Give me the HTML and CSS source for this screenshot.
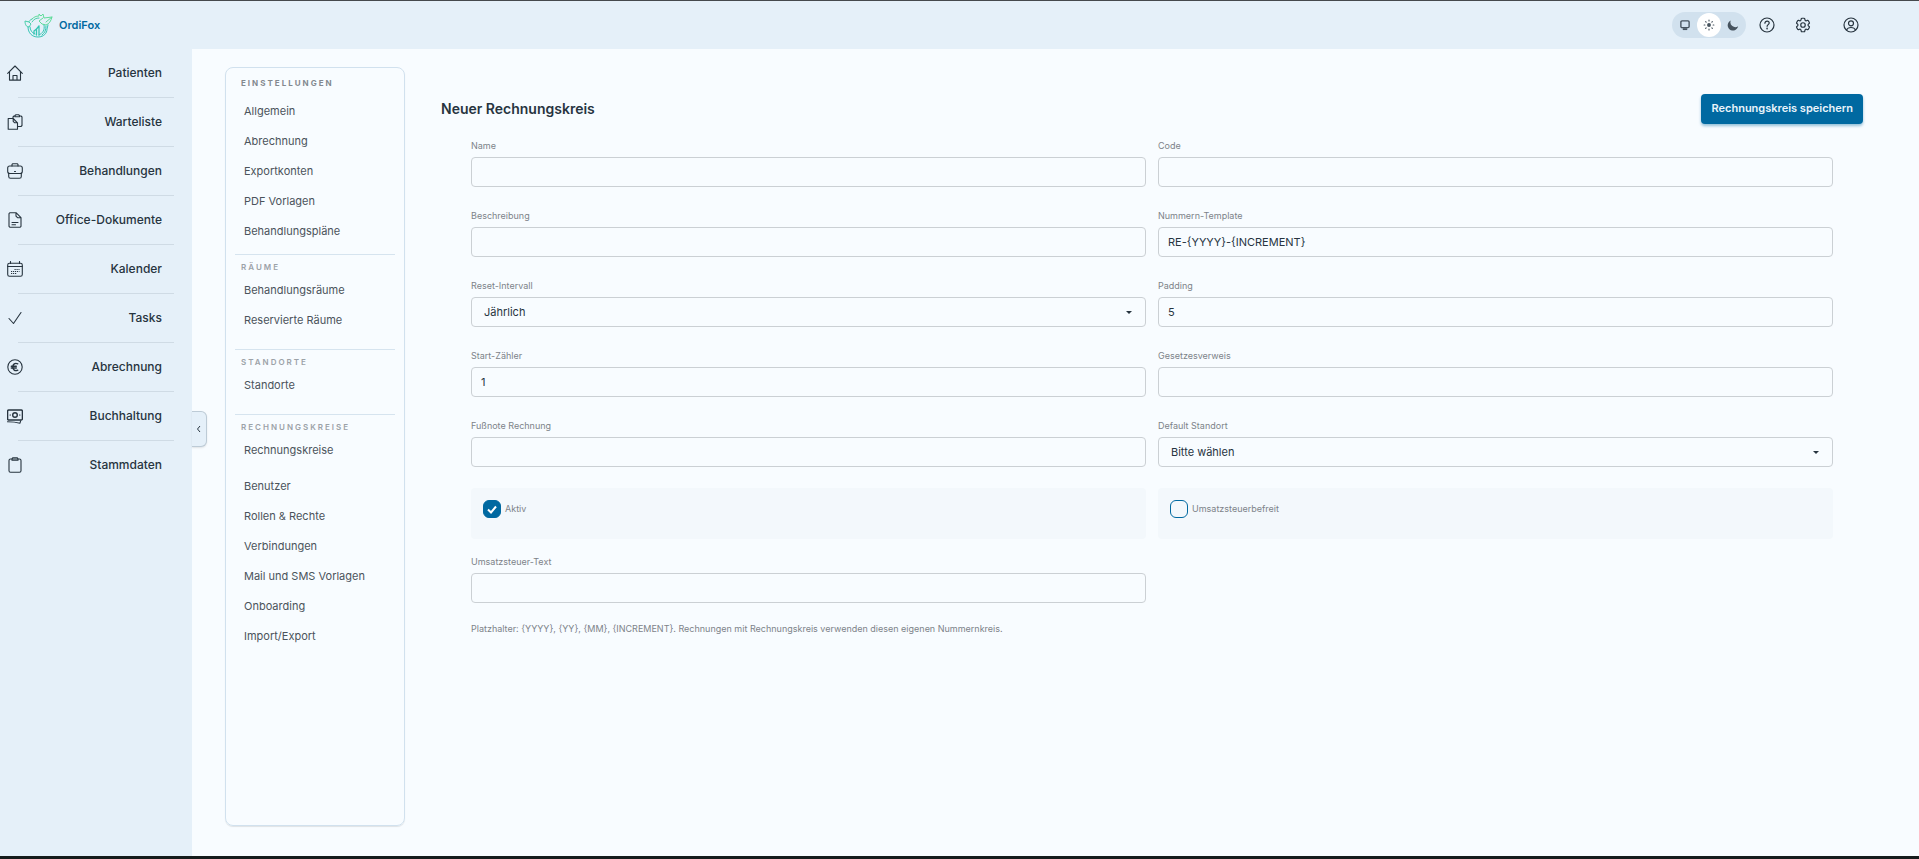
FILE: index.html
```
<!DOCTYPE html>
<html lang="de">
<head>
    <meta charset="UTF-8">
    <meta name="viewport" content="width=device-width, initial-scale=1.0">
    <title>OrdiFox - Neuer Rechnungskreis</title>
    <link rel="stylesheet" href="styles.css">
</head>
<body>
    <header class="topbar">
        <a href="#" class="brand">
            <svg class="brand-logo" viewBox="0 0 29 25" fill="none" stroke="#35c5b4" stroke-linejoin="round" stroke-linecap="round">
                <path stroke="#5fdc9a" d="M8 6c2-2 4-3 7-3V1l2 2 2-2 1 4 8-1c-1 4-3 7-6 8l-4-1-3-3 4-3M22 9l6-5"/>
                <path stroke="#48cfaa" d="M8 6C6 7 5 8 5 9L1 8c0 3 1 6 4 6L7 11 5 9M8 9c2-3 4-4 7-4"/>
                <path d="M4 14c0 6 4 10 10 10 6 0 9-4 9-8l1-4M6 14c0 3 2 6 5 7M15 22c4-2 6-5 5-10M18 22c3-2 4-5 4-9"/>
                <path stroke-width="1.3" d="M10 18v3M12.500 16v6M15 13v9M10 18l2.500-2 2.500-3"/>
            </svg>
            <span>OrdiFox</span>
        </a>
        <div class="topbar-actions">
            <div class="theme-switch">
                <button type="button" class="theme-btn" aria-label="System">
                    <svg viewBox="0 0 16 16" width="12" height="12" fill="none" stroke="currentColor" stroke-width="1.8"><rect x="2.500" y="2.500" width="11" height="9" rx="1.500"/><path d="M5 13.500h6" stroke-width="2.500"/></svg>
                </button>
                <button type="button" class="theme-btn active" aria-label="Hell">
                    <svg viewBox="0 0 16 16" width="12" height="12" fill="none" stroke="currentColor" stroke-width="1.5" stroke-linecap="round"><circle cx="8" cy="8" r="2.600" fill="currentColor" stroke="none"/><path d="M8 1.500v1M8 13.500v1M1.500 8h1M13.500 8h1M3.500 3.500l.7.7M11.800 11.800l.7.7M3.500 12.500l.7-.7M11.800 4.200l.7-.7"/></svg>
                </button>
                <button type="button" class="theme-btn" aria-label="Dunkel">
                    <svg viewBox="0 0 16 16" width="12" height="12" fill="currentColor"><path d="M5 2a6.500 6.500 0 0 0 9.800 7.600A7 7 0 1 1 5 2z"/></svg>
                </button>
            </div>
            <button type="button" class="icon-btn" aria-label="Hilfe">
                <svg viewBox="0 0 16 16" width="16" height="16" fill="none" stroke="currentColor" stroke-width="1.2" stroke-linecap="round"><circle cx="8" cy="8" r="7"/><path d="M5.900 6.200c0-1.300 1-2.100 2.200-2.100s2.100.8 2.100 1.900c0 1.500-2.100 1.700-2.100 3.300"/><circle cx="8.100" cy="11.500" r=".3"/></svg>
            </button>
            <button type="button" class="icon-btn" aria-label="Einstellungen">
                <svg viewBox="0 0 24 24" width="18" height="18" fill="none" stroke="currentColor" stroke-width="1.6" stroke-linecap="round" stroke-linejoin="round"><path d="M9.594 3.940c.09-.542.56-.94 1.110-.94h2.593c.55 0 1.020.398 1.110.94l.213 1.281c.063.374.313.686.645.870.074.040.147.083.22.127.325.196.72.257 1.075.124l1.217-.456a1.125 1.125 0 0 1 1.370.49l1.296 2.247a1.125 1.125 0 0 1-.26 1.431l-1.003.827c-.293.241-.438.613-.430.992a7.700 7.700 0 0 1 0 .255c-.008.378.137.750.430.991l1.004.827c.424.350.534.955.260 1.430l-1.298 2.247a1.125 1.125 0 0 1-1.369.491l-1.217-.456c-.355-.133-.750-.072-1.076.124a6.500 6.500 0 0 1-.220.128c-.331.183-.581.495-.644.869l-.213 1.281c-.090.543-.560.940-1.110.940h-2.594c-.550 0-1.019-.398-1.110-.940l-.213-1.281c-.062-.374-.312-.686-.644-.870a6.500 6.500 0 0 1-.220-.127c-.325-.196-.720-.257-1.076-.124l-1.217.456a1.125 1.125 0 0 1-1.369-.490l-1.297-2.247a1.125 1.125 0 0 1 .260-1.431l1.004-.827c.292-.240.437-.613.430-.991a6.900 6.900 0 0 1 0-.255c.007-.380-.138-.751-.430-.992l-1.004-.827a1.125 1.125 0 0 1-.260-1.430l1.297-2.247a1.125 1.125 0 0 1 1.370-.491l1.216.456c.356.133.751.072 1.076-.124.072-.044.146-.086.220-.128.332-.183.582-.495.644-.869z"/><circle cx="12" cy="12" r="3"/></svg>
            </button>
            <button type="button" class="icon-btn user-btn" aria-label="Profil">
                <svg viewBox="0 0 16 16" width="16" height="16" fill="none" stroke="currentColor" stroke-width="1.2"><circle cx="8" cy="8" r="7"/><circle cx="8" cy="6.300" r="2.500"/><path d="M3.300 13.100c1-1.900 2.700-2.600 4.700-2.600s3.700.7 4.700 2.600"/></svg>
            </button>
        </div>
    </header>

    <div class="shell">
        <nav class="sidebar">
            <a href="#" class="nav-item">
                <svg class="nav-icon" viewBox="0 0 16 16"><path d="M.7 8.300L8 1l7.300 7.300M2.500 6.800v8.300h11V6.800M6 15v-4.500h4V15"/></svg>
                <span>Patienten</span>
            </a>
            <a href="#" class="nav-item">
                <svg class="nav-icon" viewBox="0 0 16 16"><path d="M1.200 4.500h5l4.300 4.300v6.500H1.200zM6.200 4.500v2.800l1.500 1.500h2.800M6 4.500V3l1-1h1M12.500 2H14l1 1v8.500l-1 1h-3.500M8 2.800V1.500L9 .7h2.500l1 .8v1.300z"/></svg>
                <span>Warteliste</span>
            </a>
            <a href="#" class="nav-item">
                <svg class="nav-icon" viewBox="0 0 16 16"><rect x=".7" y="3" width="14.600" height="7.500" rx="2"/><path d="M5 3V1.500l.8-.8h4.400l.8.800V3M1.700 10v3.500c0 1 .7 1.800 1.800 1.800h9c1.100 0 1.800-.8 1.800-1.800V10M7.500 8.500h1"/></svg>
                <span>Behandlungen</span>
            </a>
            <a href="#" class="nav-item">
                <svg class="nav-icon" viewBox="0 0 16 16"><path d="M3 .7h6l5 5v8.600l-1 1H3l-1-1V1.700zM9 .7v3.500l1.500 1.500H14M5 10.500h6M5 12.700h3.500"/></svg>
                <span>Office-Dokumente</span>
            </a>
            <a href="#" class="nav-item">
                <svg class="nav-icon" viewBox="0 0 16 16"><rect x=".7" y="2.200" width="14.600" height="13" rx="1.800"/><path d="M3.500.5v2M12.500.5v2M.7 5.500h14.600"/><path stroke-linecap="butt" stroke-dasharray="1.2 .8" d="M7.500 8.500h5M4 10.500h8.500M4 12.500h6"/></svg>
                <span>Kalender</span>
            </a>
            <a href="#" class="nav-item">
                <svg class="nav-icon" viewBox="0 0 16 16"><path d="M2 8.500l4.500 5L14 2.500"/></svg>
                <span>Tasks</span>
            </a>
            <a href="#" class="nav-item">
                <svg class="nav-icon" viewBox="0 0 16 16"><circle cx="8" cy="8" r="7.200"/><path stroke-width="1.4" d="M10.800 4.800C8 3.500 5.800 5.200 5.800 8s2.200 4.500 5 3.200M4.300 7.200h5M4.300 9h5"/></svg>
                <span>Abrechnung</span>
            </a>
            <a href="#" class="nav-item">
                <svg class="nav-icon" viewBox="0 0 16 16"><rect x=".6" y="2" width="14.800" height="10" rx="1.200" stroke-width="1.4"/><circle cx="8" cy="7" r="2.300" stroke-width="1.4"/><path d="M3 7h.5M12.500 7h.5M.5 13.700c4 0 8 .2 12.500 1.500l.7-2.500"/></svg>
                <span>Buchhaltung</span>
            </a>
            <a href="#" class="nav-item">
                <svg class="nav-icon" viewBox="0 0 16 16"><rect x="2" y="2" width="12" height="13.300" rx="1.500"/><path d="M5 2l.7-1.300h4.600L11 2v1.200H5z"/></svg>
                <span>Stammdaten</span>
            </a>
            <button type="button" class="sidebar-toggle" aria-label="Menü einklappen">
                <svg viewBox="0 0 8 8" width="8" height="8" fill="none" stroke="currentColor"><path d="M5 1L2.500 4 5 7"/></svg>
            </button>
        </nav>

        <main class="page">
            <aside class="settings">
                <h2 class="settings-title">Einstellungen</h2>
                <div class="settings-group">
                    <a href="#">Allgemein</a>
                    <a href="#">Abrechnung</a>
                    <a href="#">Exportkonten</a>
                    <a href="#">PDF Vorlagen</a>
                    <a href="#">Behandlungspläne</a>
                </div>
                <h3 class="settings-sub">Räume</h3>
                <div class="settings-group spaced">
                    <a href="#">Behandlungsräume</a>
                    <a href="#">Reservierte Räume</a>
                </div>
                <h3 class="settings-sub">Standorte</h3>
                <div class="settings-group spaced">
                    <a href="#">Standorte</a>
                </div>
                <h3 class="settings-sub">Rechnungskreise</h3>
                <div class="settings-group spaced">
                    <a href="#">Rechnungskreise</a>
                </div>
                <div class="settings-group">
                    <a href="#">Benutzer</a>
                    <a href="#">Rollen &amp; Rechte</a>
                    <a href="#">Verbindungen</a>
                    <a href="#">Mail und SMS Vorlagen</a>
                    <a href="#">Onboarding</a>
                    <a href="#">Import/Export</a>
                </div>
            </aside>

            <form class="content">
                <div class="content-head">
                    <h1>Neuer Rechnungskreis</h1>
                    <button type="button" class="btn">Rechnungskreis speichern</button>
                </div>
                <div class="form-grid">
                    <div class="field">
                        <label for="name">Name</label>
                        <input type="text" id="name">
                    </div>
                    <div class="field">
                        <label for="code">Code</label>
                        <input type="text" id="code">
                    </div>
                    <div class="field">
                        <label for="beschreibung">Beschreibung</label>
                        <input type="text" id="beschreibung">
                    </div>
                    <div class="field">
                        <label for="template">Nummern-Template</label>
                        <input type="text" id="template" value="RE-{YYYY}-{INCREMENT}">
                    </div>
                    <div class="field">
                        <label for="reset">Reset-Intervall</label>
                        <select id="reset">
                            <option>Jährlich</option>
                            <option>Monatlich</option>
                        </select>
                    </div>
                    <div class="field">
                        <label for="padding">Padding</label>
                        <input type="text" id="padding" value="5">
                    </div>
                    <div class="field">
                        <label for="start">Start-Zähler</label>
                        <input type="text" id="start" value="1">
                    </div>
                    <div class="field">
                        <label for="gesetz">Gesetzesverweis</label>
                        <input type="text" id="gesetz">
                    </div>
                    <div class="field">
                        <label for="fussnote">Fußnote Rechnung</label>
                        <input type="text" id="fussnote">
                    </div>
                    <div class="field">
                        <label for="standort">Default Standort</label>
                        <select id="standort">
                            <option>Bitte wählen</option>
                        </select>
                    </div>
                    <div class="check-field">
                        <input type="checkbox" id="aktiv" checked>
                        <label for="aktiv">Aktiv</label>
                    </div>
                    <div class="check-field">
                        <input type="checkbox" id="ustfrei">
                        <label for="ustfrei">Umsatzsteuerbefreit</label>
                    </div>
                    <div class="field">
                        <label for="usttext">Umsatzsteuer-Text</label>
                        <input type="text" id="usttext">
                    </div>
                </div>
                <p class="hint">Platzhalter: {YYYY}, {YY}, {MM}, {INCREMENT}. Rechnungen mit Rechnungskreis verwenden diesen eigenen Nummernkreis.</p>
            </form>
        </main>
    </div>
</body>
</html>
```
FILE: styles.css
```
* {
    box-sizing: border-box;
}

body {
    margin: 0;
    min-height: 100vh;
    display: flex;
    flex-direction: column;
    font-family: Inter, sans-serif;
    font-size: 11px;
    color: #27343f;
    background: #f8fcff;
    border-top: 1px solid #45494d;
    border-bottom: 3px solid #151c1c;
}

a {
    color: inherit;
    text-decoration: none;
}

button, input, select {
    font-family: inherit;
    color: inherit;
}

button {
    padding: 0;
    border: none;
    background: none;
    cursor: pointer;
}

/* Kopfzeile */
.topbar {
    height: 48px;
    display: flex;
    align-items: center;
    justify-content: space-between;
    padding: 0 50px 0 24px;
    background: #e5f0f9;
}

.brand {
    display: flex;
    align-items: center;
    gap: 6px;
    font-weight: 600;
    color: #0069a1;
}

.brand-logo {
    width: 29px;
    height: 25px;
}

.topbar-actions {
    display: flex;
    align-items: center;
}

.theme-switch {
    display: flex;
    margin-right: 3px;
    padding: 1px;
    border-radius: 13px;
    background: #d1e1ee;
}

.theme-btn {
    width: 24px;
    height: 24px;
    display: flex;
    align-items: center;
    justify-content: center;
    border-radius: 50%;
    color: #46535e;
}

.theme-btn.active {
    background: #fff;
}

.icon-btn {
    width: 36px;
    height: 24px;
    display: flex;
    align-items: center;
    justify-content: center;
}

.user-btn {
    margin-left: 12px;
}

/* Seitenleiste */
.shell {
    flex: 1;
    display: flex;
}

.sidebar {
    position: relative;
    width: 192px;
    flex-shrink: 0;
    background: #e5f0f9;
}

.nav-item {
    height: 49px;
    display: flex;
    align-items: center;
    justify-content: space-between;
    padding: 0 30px 2px 7px;
    font-size: 12px;
    font-weight: 500;
    background: linear-gradient(#cfdbe5, #cfdbe5) no-repeat 18px 100% / 156px 1px;
}

.nav-item:nth-of-type(9) {
    background: none;
}

.nav-icon {
    width: 16px;
    height: 16px;
    fill: none;
    stroke: currentColor;
    stroke-width: 1.1;
    stroke-linecap: round;
    stroke-linejoin: round;
}

.sidebar-toggle {
    position: absolute;
    left: 100%;
    top: 362px;
    width: 15px;
    height: 36px;
    display: flex;
    align-items: center;
    justify-content: center;
    background: #e5f0f9;
    border: 1px solid #bdcbd6;
    border-left: none;
    border-radius: 0 6px 6px 0;
    box-shadow: 0 1px 2px rgba(0, 0, 0, 0.1);
}

/* Inhalt */
.page {
    flex: 1;
    display: flex;
    gap: 36px;
    padding: 18px 56px 30px 33px;
}

.settings {
    width: 180px;
    flex-shrink: 0;
    padding: 7px 9px;
    border: 1px solid #d1e1ee;
    border-radius: 8px;
    box-shadow: 0 1px 1px rgba(0, 0, 0, 0.1);
}

.settings-title,
.settings-sub {
    margin: 0;
    padding: 0 6px;
    font-size: 8px;
    line-height: 16px;
    letter-spacing: 2px;
    text-transform: uppercase;
}

.settings-title {
    margin-bottom: 5px;
    font-weight: 700;
    color: #83898f;
}

.settings-sub {
    margin-top: 8px;
    padding-top: 4px;
    font-weight: 600;
    color: #9ca2a8;
    border-top: 1px solid #d6e4ef;
}

.settings-group {
    display: flex;
    flex-direction: column;
}

.settings-group.spaced {
    padding-bottom: 6px;
}

.settings-group a {
    padding: 0 9px;
    line-height: 30px;
    color: #4b535b;
}

.content {
    flex: 1;
}

.content-head {
    display: flex;
    align-items: center;
    justify-content: space-between;
    padding-top: 27px;
}

.content-head h1 {
    margin: 0;
    padding-bottom: 2px;
    font-size: 14px;
    font-weight: 600;
}

.btn {
    height: 30px;
    padding: 0 10px 2px;
    font-size: 11px;
    font-weight: 600;
    color: #e9f4fb;
    background: #0069a1;
    border-radius: 4px;
    box-shadow: 0 2px 3px rgba(0, 105, 161, 0.4);
}

.form-grid {
    display: grid;
    grid-template-columns: 1fr 1fr;
    gap: 15px 12px;
    padding: 14px 30px 0;
}

.field {
    display: flex;
    flex-direction: column;
    gap: 3px;
    margin-bottom: 6px;
}

.field label,
.check-field label,
.hint {
    font-size: 9px;
    line-height: 16px;
    color: #7d8389;
}

.field input,
.field select {
    width: 100%;
    height: 30px;
    padding: 0 9px 1px;
    font-size: 11px;
    background: transparent;
    border: 1px solid #cbd0d4;
    border-radius: 4px;
}

.field select {
    appearance: none;
    padding: 0 12px 1px;
    background: url("data:image/svg+xml,%3Csvg xmlns='http://www.w3.org/2000/svg' width='6' height='3'%3E%3Cpath d='M0 0h6L3 3z' fill='%2327343f'/%3E%3C/svg%3E") no-repeat right 13px center;
}

.check-field {
    display: flex;
    align-items: flex-start;
    gap: 4px;
    height: 51px;
    padding: 12px;
    border-radius: 4px;
    background: #f3f8fc;
}

.check-field input {
    appearance: none;
    width: 18px;
    height: 18px;
    margin: 0;
    border: 1px solid #0069a1;
    border-radius: 6px;
}

.check-field input:checked {
    background: #0069a1 url("data:image/svg+xml,%3Csvg xmlns='http://www.w3.org/2000/svg' viewBox='0 0 16 16' fill='none' stroke='white' stroke-width='2'%3E%3Cpath d='M4 8.500l3 3 5-6'/%3E%3C/svg%3E") center / 16px 16px;
}

.check-field label {
    line-height: 18px;
}

.hint {
    margin: 12px 30px 0;
}
```
